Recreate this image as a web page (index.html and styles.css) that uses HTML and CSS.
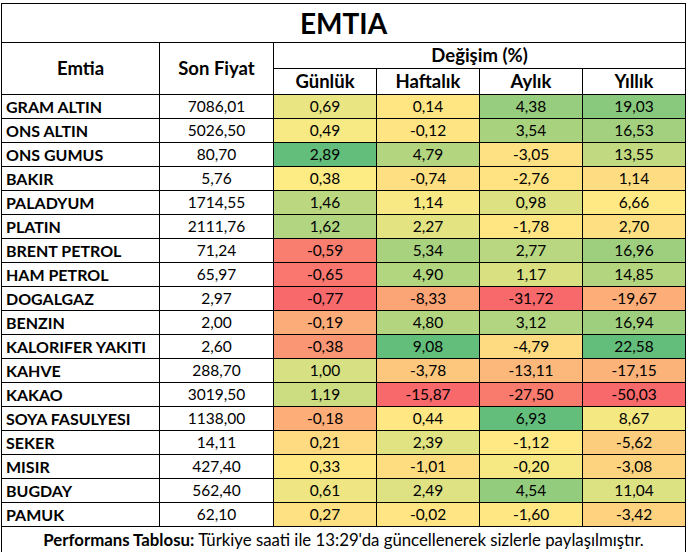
FILE: index.html
```html
<!DOCTYPE html>
<html lang="tr">
<head>
<meta charset="utf-8">
<title>EMTIA</title>
<link rel="stylesheet" href="styles.css">
</head>
<body>
<table class="perf">
  <colgroup>
    <col class="c-name"><col class="c-price"><col class="c-chg"><col class="c-chg"><col class="c-chg"><col class="c-chg">
  </colgroup>
  <thead>
    <tr class="r-title"><th colspan="6" class="title">EMTIA</th></tr>
    <tr class="r-head"><th rowspan="2">Emtia</th><th rowspan="2">Son Fiyat</th><th colspan="4">Değişim (%)</th></tr>
    <tr class="r-head"><th>Günlük</th><th>Haftalık</th><th>Aylık</th><th>Yıllık</th></tr>
  </thead>
  <tbody>
    <tr><td class="name">GRAM ALTIN</td><td>7086,01</td><td style="background:#EAE583">0,69</td><td style="background:#FFE683">0,14</td><td style="background:#97CD7E">4,38</td><td style="background:#88C97D">19,03</td></tr>
    <tr><td class="name">ONS ALTIN</td><td>5026,50</td><td style="background:#F7E983">0,49</td><td style="background:#FFE483">-0,12</td><td style="background:#A9D27F">3,54</td><td style="background:#A2D07F">16,53</td></tr>
    <tr><td class="name">ONS GUMUS</td><td>80,70</td><td style="background:#63BE7B">2,89</td><td style="background:#B4D580">4,79</td><td style="background:#FEE182">-3,05</td><td style="background:#C1D980">13,55</td></tr>
    <tr><td class="name">BAKIR</td><td>5,76</td><td style="background:#FDEB84">0,38</td><td style="background:#FEDF82">-0,74</td><td style="background:#FFE282">-2,76</td><td style="background:#FEDC81">1,14</td></tr>
    <tr><td class="name">PALADYUM</td><td>1714,55</td><td style="background:#BBD780">1,46</td><td style="background:#F8E984">1,14</td><td style="background:#DDE182">0,98</td><td style="background:#FFE984">6,66</td></tr>
    <tr><td class="name">PLATIN</td><td>2111,76</td><td style="background:#B1D580">1,62</td><td style="background:#E3E382">2,27</td><td style="background:#FFE683">-1,78</td><td style="background:#FEE082">2,70</td></tr>
    <tr><td class="name">BRENT PETROL</td><td>71,24</td><td style="background:#F97E6F">-0,59</td><td style="background:#A9D27F">5,34</td><td style="background:#B9D780">2,77</td><td style="background:#9ECF7E">16,96</td></tr>
    <tr><td class="name">HAM PETROL</td><td>65,97</td><td style="background:#F9776E">-0,65</td><td style="background:#B2D580">4,90</td><td style="background:#D9E082">1,17</td><td style="background:#B4D580">14,85</td></tr>
    <tr><td class="name">DOGALGAZ</td><td>2,97</td><td style="background:#F8696B">-0,77</td><td style="background:#FBA476">-8,33</td><td style="background:#F8696B">-31,72</td><td style="background:#FCAD78">-19,67</td></tr>
    <tr><td class="name">BENZIN</td><td>2,00</td><td style="background:#FCAC78">-0,19</td><td style="background:#B3D580">4,80</td><td style="background:#B1D580">3,12</td><td style="background:#9ECF7E">16,94</td></tr>
    <tr><td class="name">KALORIFER YAKITI</td><td>2,60</td><td style="background:#FA9674">-0,38</td><td style="background:#63BE7B">9,08</td><td style="background:#FEDA81">-4,79</td><td style="background:#63BE7B">22,58</td></tr>
    <tr><td class="name">KAHVE</td><td>288,70</td><td style="background:#D7E082">1,00</td><td style="background:#FDC77D">-3,78</td><td style="background:#FCB77A">-13,11</td><td style="background:#FCB379">-17,15</td></tr>
    <tr><td class="name">KAKAO</td><td>3019,50</td><td style="background:#CCDC81">1,19</td><td style="background:#F8696B">-15,87</td><td style="background:#F97B6E">-27,50</td><td style="background:#F8696B">-50,03</td></tr>
    <tr><td class="name">SOYA FASULYESI</td><td>1138,00</td><td style="background:#FCAD78">-0,18</td><td style="background:#FFE883">0,44</td><td style="background:#63BE7B">6,93</td><td style="background:#F4E883">8,67</td></tr>
    <tr><td class="name">SEKER</td><td>14,11</td><td style="background:#FEDA81">0,21</td><td style="background:#E1E282">2,39</td><td style="background:#FFE984">-1,12</td><td style="background:#FDCD7E">-5,62</td></tr>
    <tr><td class="name">MISIR</td><td>427,40</td><td style="background:#FFE883">0,33</td><td style="background:#FEDD81">-1,01</td><td style="background:#F6E883">-0,20</td><td style="background:#FED37F">-3,08</td></tr>
    <tr><td class="name">BUGDAY</td><td>562,40</td><td style="background:#EFE683">0,61</td><td style="background:#DFE282">2,49</td><td style="background:#94CC7E">4,54</td><td style="background:#DCE182">11,04</td></tr>
    <tr><td class="name">PAMUK</td><td>62,10</td><td style="background:#FEE182">0,27</td><td style="background:#FFE583">-0,02</td><td style="background:#FFE783">-1,60</td><td style="background:#FED27F">-3,42</td></tr>
  </tbody>
  <tfoot>
    <tr class="r-foot"><td colspan="6"><b>Performans Tablosu:</b> Türkiye saati ile 13:29'da güncellenerek sizlerle paylaşılmıştır.</td></tr>
  </tfoot>
</table>
</body>
</html>
```
FILE: styles.css
```css
html, body {
  margin: 0;
  padding: 0;
  background: #ffffff;
  overflow: hidden;
}
body {
  padding: 3px 0 0 1px;
  font-family: Lato, "Open Sans", sans-serif;
  color: #000;
}
.perf {
  border-collapse: collapse;
  table-layout: fixed;
  width: 684px;
  font-size: 15.5px;
}
.c-name { width: 158px; }
.c-price { width: 114px; }
.c-chg { width: 103px; }
.perf th, .perf td {
  border: 1px solid #000;
  padding: 0;
  text-align: center;
  white-space: nowrap;
  overflow: hidden;
}
.perf td { height: 23px; line-height: 23px; }
.perf th { font-weight: 700; font-size: 18.5px; }
.r-title th { height: 38px; font-size: 28px; line-height: 38px; }
.r-head th { height: 25px; line-height: 25px; }
.perf td.name { text-align: left; padding-left: 4px; font-weight: 700; font-size: 16px; }
.r-foot td { height: 25px; line-height: 25px; font-size: 16.8px; }
```
